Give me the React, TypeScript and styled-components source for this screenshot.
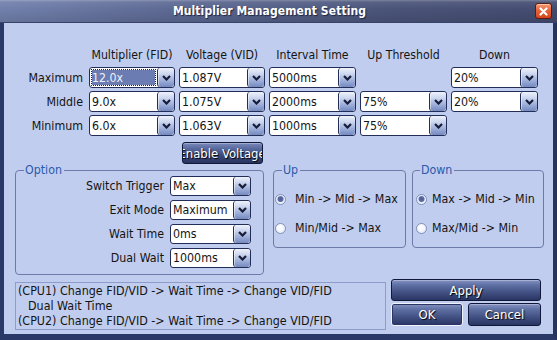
import React from "react";
import styled, { createGlobalStyle } from "styled-components";

const GlobalStyle = createGlobalStyle`
  html, body { margin: 0; padding: 0; background: #c1cdee; }
  body {
    font-family: "DejaVu Sans Condensed", "DejaVu Sans", sans-serif;
    font-stretch: condensed;
    font-size: 12px;
    color: #141414;
  }
  * { box-sizing: border-box; }
`;

const Window = styled.div`
  width: 557px;
  height: 340px;
  display: flex;
  flex-direction: column;
  background: #c1cdee;
  overflow: hidden;
`;

const TitleBar = styled.div`
  height: 23px;
  flex: none;
  display: flex;
  align-items: center;
  padding: 0 5px 0 4px;
  background:
    linear-gradient(180deg, rgba(255,255,255,0.28) 0, rgba(255,255,255,0.08) 2px, rgba(255,255,255,0) 9px, rgba(0,0,0,0.1) 100%),
    linear-gradient(90deg, #7180ac 0%, #5a6690 35%, #4a5479 70%, #434c70 100%);
  border-bottom: 1px solid #39436a;
`;

const Title = styled.div`
  flex: 1;
  text-align: center;
  color: #fff;
  font-weight: bold;
  font-size: 12px;
  text-shadow: 1px 1px 1px #1d2440;
  letter-spacing: 0.1px;
`;

const CloseButton = styled.div`
  width: 17px;
  height: 16px;
  border: 1px solid #5a1c0c;
  border-radius: 3px;
  background: linear-gradient(180deg, #f79a72 0%, #e8643a 45%, #d4461e 100%);
  box-shadow: inset 0 1px 0 rgba(255,255,255,0.45);
  display: flex;
  align-items: center;
  justify-content: center;
`;

const Body = styled.div`
  flex: 1;
  display: flex;
  flex-direction: column;
  border-left: 4px solid #2a3868;
  border-right: 4px solid #26335f;
  border-bottom: 6px solid #2a3868;
`;

const Matrix = styled.div`
  display: grid;
  grid-template-columns: 81px 86px 86px 87px 87px 87px;
  grid-template-rows: 19px 21px 21px 21px 25px;
  column-gap: 4px;
  row-gap: 3px;
  padding-top: 22px;
`;

const HeaderCell = styled.div`
  align-self: center;
  text-align: center;
  white-space: nowrap;
  font-size: 12.2px;
`;

const RowLabel = styled.div`
  align-self: center;
  text-align: right;
  padding-right: 2px;
  white-space: nowrap;
  font-size: 12.3px;
`;

const Combo = styled.div<{ $h?: number }>`
  height: ${(p) => p.$h ?? 21}px;
  display: flex;
  border: 1px solid #222e58;
  border-radius: 3px;
  background: #fff;
  overflow: hidden;
`;

const ComboValue = styled.div<{ $focused?: boolean }>`
  flex: 1;
  display: flex;
  align-items: center;
  padding-left: ${(p) => (p.$focused ? 0 : 2)}px;
  margin: ${(p) => (p.$focused ? "2px" : "0")};
  background: ${(p) => (p.$focused ? "#6a7cb2" : "transparent")};
  outline: ${(p) => (p.$focused ? "1px dotted #1b2242" : "none")};
  color: ${(p) => (p.$focused ? "#eef1fb" : "#141414")};
  white-space: nowrap;
  font-size: 12.3px;
`;

const ComboArrow = styled.div`
  width: 17px;
  flex: none;
  border-left: 1px solid #222e58;
  border-radius: 3px;
  background: linear-gradient(180deg, #eef2fb 0%, #cdd7ef 30%, #9fb0da 65%, #7489bf 100%);
  box-shadow: inset 1px 0 0 rgba(255,255,255,0.5);
  display: flex;
  align-items: center;
  justify-content: center;
`;

const EnableButton = styled.div`
  grid-column: 3;
  justify-self: center;
  align-self: end;
  width: 81px;
  height: 22px;
  display: flex;
  align-items: center;
  justify-content: center;
  overflow: hidden;
  white-space: nowrap;
  border: 1px solid #10183a;
  border-radius: 3px;
  background: linear-gradient(180deg, #7b8abb 0%, #56679c 30%, #3a4879 65%, #28335f 100%);
  box-shadow: inset 0 1px 0 rgba(255,255,255,0.3);
  color: #fff;
  font-size: 13px;
  text-shadow: 1px 1px 1px #000;
`;

const GroupsRow = styled.div`
  display: flex;
  align-items: flex-start;
  gap: 6px;
  padding-left: 11px;
`;

const Group = styled.fieldset<{ $w: number; $h: number; $mr?: number }>`
  width: ${(p) => p.$w}px;
  height: ${(p) => p.$h}px;
  margin: 0 ${(p) => p.$mr ?? 0}px 0 0;
  padding: 0;
  min-width: 0;
  border: 1px solid #6b7aa6;
  border-radius: 4px;
`;

const Legend = styled.legend<{ $ml: number }>`
  font-size: 12.3px;
  line-height: 12px;
  color: #2a5aac;
  padding: 0 2px 0 1px;
  margin-left: ${(p) => p.$ml}px;
`;

const OptionGrid = styled.div`
  display: grid;
  grid-template-columns: 142px 81px;
  grid-auto-rows: 20px;
  column-gap: 4px;
  row-gap: 4px;
  padding: 0 8px;
`;

const RadioList = styled.div<{ $pl: number }>`
  display: flex;
  flex-direction: column;
  gap: 9px;
  padding: 13px 0 0 ${(p) => p.$pl}px;
`;

const RadioRow = styled.div<{ $gap: number }>`
  height: 20px;
  display: flex;
  align-items: center;
  gap: ${(p) => p.$gap}px;
  white-space: nowrap;
  font-size: 12.3px;
`;

const RadioCircle = styled.span<{ $on?: boolean }>`
  width: 11px;
  height: 11px;
  flex: none;
  border-radius: 50%;
  border: 1px solid #8190b8;
  background: ${(p) =>
    p.$on
      ? "radial-gradient(circle at 50% 45%, #4b5c92 0, #5d6fa6 2.5px, #e9eefa 3.5px, #ffffff 100%)"
      : "radial-gradient(circle at 40% 35%, #ffffff 0, #f2f5fc 50%, #d9e1f3 100%)"};
`;

const Footer = styled.div`
  display: flex;
  align-items: flex-start;
  padding-left: 11px;
  margin-top: 4px;
`;

const InfoBox = styled.div`
  width: 371px;
  height: 48px;
  margin-top: 3px;
  border: 1px solid #8d9ccb;
  padding: 0 2px;
  line-height: 15px;
  font-size: 12.4px;
  white-space: nowrap;
  overflow: hidden;
`;

const InfoLine = styled.div<{ $indent?: number }>`
  padding-left: ${(p) => p.$indent ?? 0}px;
`;

const ButtonStack = styled.div`
  width: 150px;
  margin-left: 5px;
  display: flex;
  flex-direction: column;
  gap: 2px;
`;

const ButtonRow = styled.div`
  display: flex;
  gap: 5px;
`;

const NavyButton = styled.div<{ $w?: number; $h: number; $default?: boolean }>`
  width: ${(p) => (p.$w ? `${p.$w}px` : "100%")};
  height: ${(p) => p.$h}px;
  display: flex;
  align-items: center;
  justify-content: center;
  border: 1px solid ${(p) => (p.$default ? "#eef2fd" : "#10183a")};
  border-radius: 3px;
  background: linear-gradient(180deg, #8593c2 0%, #5f70a4 25%, #3f4e80 65%, #2a3563 100%);
  box-shadow: ${(p) => (p.$default ? "inset 0 0 0 1px #2a3563" : "inset 0 1px 0 rgba(255,255,255,0.3)")};
  color: #fff;
  font-size: 13px;
  text-shadow: 1px 1px 1px #000;
`;

const Chevron = () => (
  <svg width="9" height="6" viewBox="0 0 9 6">
    <path d="M1 1 L4.5 4.5 L8 1" fill="none" stroke="#161c38" strokeWidth="2.2" />
  </svg>
);

const Select: React.FC<{ value: string; focused?: boolean; h?: number }> = ({ value, focused, h }) => (
  <Combo $h={h}>
    <ComboValue $focused={focused}>{value}</ComboValue>
    <ComboArrow>
      <Chevron />
    </ComboArrow>
  </Combo>
);

const Radio: React.FC<{ label: string; on?: boolean; gap: number }> = ({ label, on, gap }) => (
  <RadioRow $gap={gap}>
    <RadioCircle $on={on} />
    <span>{label}</span>
  </RadioRow>
);

const headers = ["Multiplier (FID)", "Voltage (VID)", "Interval Time", "Up Threshold", "Down"];

const rows: { label: string; cells: (string | null)[] }[] = [
  { label: "Maximum", cells: ["12.0x", "1.087V", "5000ms", null, "20%"] },
  { label: "Middle", cells: ["9.0x", "1.075V", "2000ms", "75%", "20%"] },
  { label: "Minimum", cells: ["6.0x", "1.063V", "1000ms", "75%", null] },
];

const options = [
  { label: "Switch Trigger", value: "Max" },
  { label: "Exit Mode", value: "Maximum" },
  { label: "Wait Time", value: "0ms" },
  { label: "Dual Wait", value: "1000ms" },
];

export default function App() {
  return (
    <>
      <GlobalStyle />
      <Window>
        <TitleBar>
          <Title>Multiplier Management Setting</Title>
          <CloseButton>
            <svg width="9" height="9" viewBox="0 0 9 9">
              <path d="M1.5 1.5 L7.5 7.5 M7.5 1.5 L1.5 7.5" stroke="#fff" strokeWidth="2.2" strokeLinecap="round" />
            </svg>
          </CloseButton>
        </TitleBar>
        <Body>
          <Matrix>
            <span />
            {headers.map((h) => (
              <HeaderCell key={h}>{h}</HeaderCell>
            ))}
            {rows.map((r, ri) => (
              <React.Fragment key={r.label}>
                <RowLabel>{r.label}</RowLabel>
                {r.cells.map((c, ci) =>
                  c === null ? <span key={ci} /> : <Select key={ci} value={c} focused={ri === 0 && ci === 0} />
                )}
              </React.Fragment>
            ))}
            <EnableButton>Enable Voltage</EnableButton>
          </Matrix>
          <GroupsRow>
            <Group $w={249} $h={111} $mr={3}>
              <Legend $ml={8}>Option</Legend>
              <OptionGrid>
                {options.map((o) => (
                  <React.Fragment key={o.label}>
                    <RowLabel>{o.label}</RowLabel>
                    <Select value={o.value} h={20} />
                  </React.Fragment>
                ))}
              </OptionGrid>
            </Group>
            <Group $w={133} $h={84}>
              <Legend $ml={8}>Up</Legend>
              <RadioList $pl={1}>
                <Radio label="Min -> Mid -> Max" on gap={9} />
                <Radio label="Min/Mid -> Max" gap={9} />
              </RadioList>
            </Group>
            <Group $w={132} $h={84}>
              <Legend $ml={7}>Down</Legend>
              <RadioList $pl={3}>
                <Radio label="Max -> Mid -> Min" on gap={5} />
                <Radio label="Max/Mid -> Min" gap={5} />
              </RadioList>
            </Group>
          </GroupsRow>
          <Footer>
            <InfoBox>
              <InfoLine>(CPU1) Change FID/VID -&gt; Wait Time -&gt; Change VID/FID</InfoLine>
              <InfoLine $indent={10}>Dual Wait Time</InfoLine>
              <InfoLine>(CPU2) Change FID/VID -&gt; Wait Time -&gt; Change VID/FID</InfoLine>
            </InfoBox>
            <ButtonStack>
              <NavyButton $h={22}>Apply</NavyButton>
              <ButtonRow>
                <NavyButton $w={72} $h={23} $default>
                  OK
                </NavyButton>
                <NavyButton $w={73} $h={23}>
                  Cancel
                </NavyButton>
              </ButtonRow>
            </ButtonStack>
          </Footer>
        </Body>
      </Window>
    </>
  );
}
